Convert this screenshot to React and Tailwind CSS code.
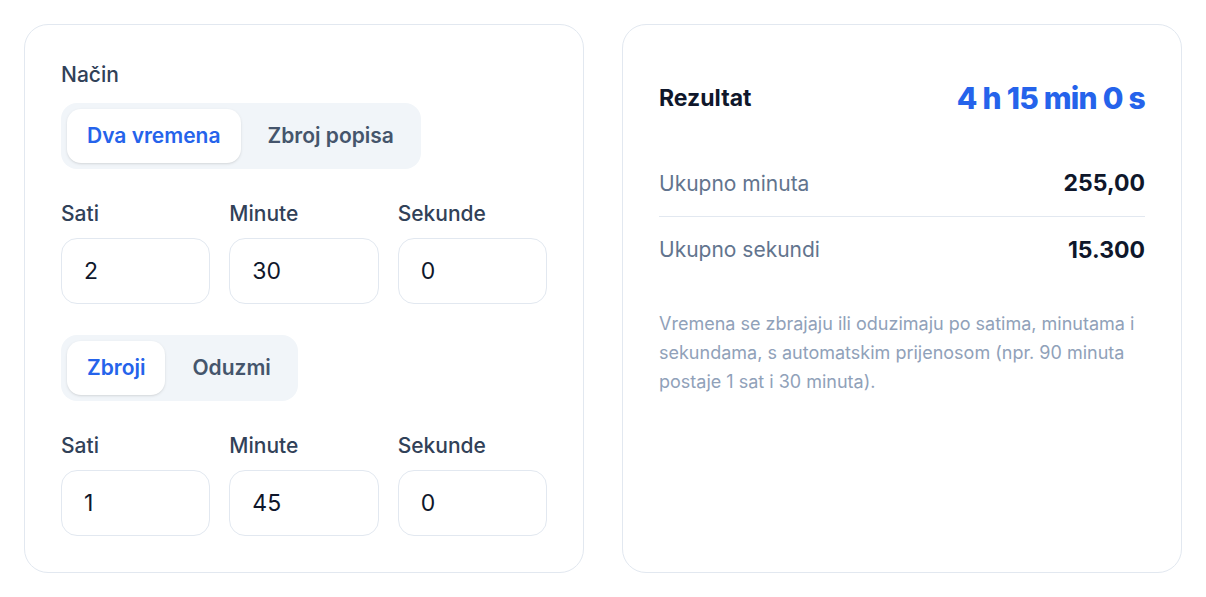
import { useState } from 'react';

const font = { fontFamily: 'Inter, "Noto Sans", sans-serif' };

function Segmented({ options, value, onChange }) {
  return (
    <div className="inline-flex gap-1.5 rounded-2xl bg-slate-100 p-1.5">
      {options.map((opt) => (
        <button
          key={opt}
          onClick={() => onChange(opt)}
          className={
            opt === value
              ? 'h-[54px] rounded-[14px] bg-white px-5 text-[21px] font-semibold text-[#2563eb] shadow-sm'
              : 'h-[54px] rounded-[14px] px-[21px] text-[21px] font-semibold text-slate-600'
          }
        >
          {opt}
        </button>
      ))}
    </div>
  );
}

function TimeInputs({ values }) {
  const labels = ['Sati', 'Minute', 'Sekunde'];
  return (
    <div className="grid grid-cols-3 gap-[19px]">
      {labels.map((label, i) => (
        <label key={label} className="flex flex-col">
          <span className="mb-2.5 text-[21px] leading-7 font-medium text-slate-700">{label}</span>
          <input
            defaultValue={values[i]}
            className="h-[66px] w-full rounded-2xl border border-slate-200 bg-white px-[22px] text-[23px] text-slate-900 outline-none"
          />
        </label>
      ))}
    </div>
  );
}

export default function App() {
  const [mode, setMode] = useState('Dva vremena');
  const [op, setOp] = useState('Zbroji');

  return (
    <div className="min-h-screen bg-white px-6 pt-6" style={font}>
      <div className="grid grid-cols-2 gap-[38px]">
        {/* Unos */}
        <div className="rounded-3xl border border-slate-200 bg-white p-9">
          <div className="mb-3.5 text-[21px] leading-7 font-medium text-slate-700">Način</div>
          <Segmented options={['Dva vremena', 'Zbroj popisa']} value={mode} onChange={setMode} />
          <div className="mt-[31px]">
            <TimeInputs values={['2', '30', '0']} />
          </div>
          <div className="mt-[31px]">
            <Segmented options={['Zbroji', 'Oduzmi']} value={op} onChange={setOp} />
          </div>
          <div className="mt-[31px]">
            <TimeInputs values={['1', '45', '0']} />
          </div>
        </div>

        {/* Rezultat */}
        <div className="rounded-3xl border border-slate-200 bg-white p-9">
          <div className="flex items-center justify-between py-[19px]">
            <span className="text-[23px] font-bold text-slate-900">Rezultat</span>
            <span className="text-[30px] leading-9 font-extrabold tracking-tight text-[#2563eb]">4 h 15 min 0 s</span>
          </div>
          <div className="mt-4">
            <div className="flex h-[66px] items-center justify-between border-b border-slate-200">
              <span className="text-[21px] text-slate-500">Ukupno minuta</span>
              <span className="text-[23px] font-bold text-slate-900">255,00</span>
            </div>
            <div className="flex h-[66px] items-center justify-between">
              <span className="text-[21px] text-slate-500">Ukupno sekundi</span>
              <span className="text-[23px] font-bold text-slate-900">15.300</span>
            </div>
          </div>
          <p className="mt-[26px] text-[18px] leading-[29px] text-slate-400">
            Vremena se zbrajaju ili oduzimaju po satima, minutama i sekundama, s automatskim prijenosom (npr. 90
            minuta postaje 1 sat i 30 minuta).
          </p>
        </div>
      </div>
      <div className="mt-6 flex justify-end pr-[14px]">
        <div className="h-px w-[210px] bg-slate-100" />
      </div>
    </div>
  );
}
